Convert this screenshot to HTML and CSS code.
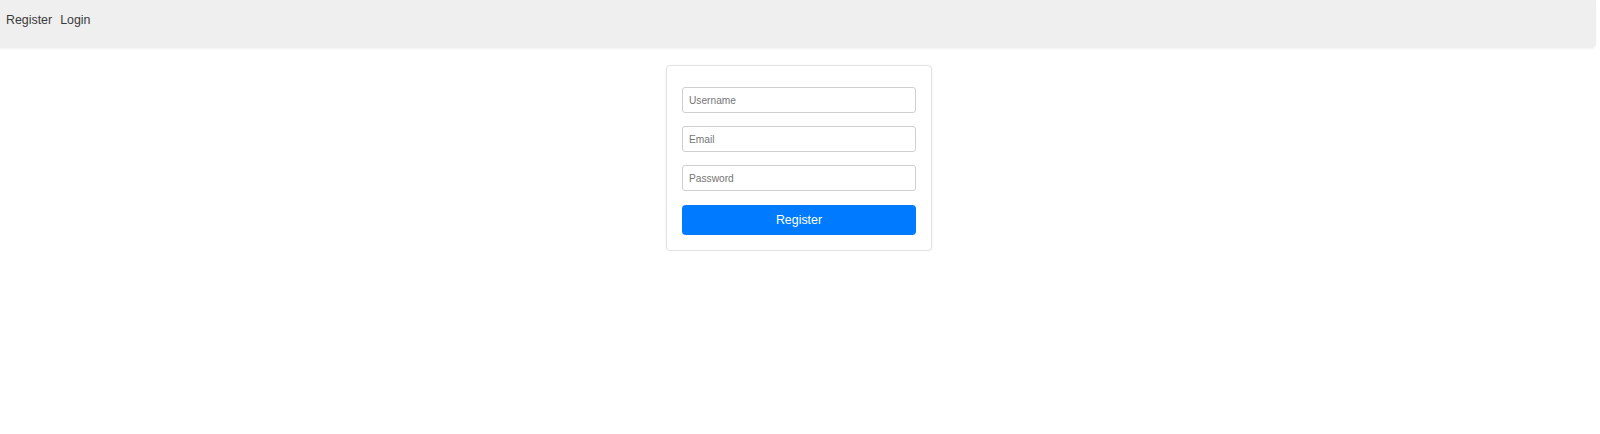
FILE: index.html
```html
<!DOCTYPE html>
<html lang="en">
<head>
<meta charset="utf-8">
<title>Register</title>
<link rel="stylesheet" href="styles.css">
</head>
<body>
<nav class="navbar">
  <a class="nav-link" href="#">Register</a>
  <a class="nav-link" href="#">Login</a>
</nav>
<main class="page">
  <form class="card">
    <input class="field" type="text" placeholder="Username">
    <input class="field" type="email" placeholder="Email">
    <input class="field" type="password" placeholder="Password">
    <button class="btn" type="button">Register</button>
  </form>
</main>
</body>
</html>
```

FILE: styles.css
```css
html, body {
  margin: 0;
  padding: 0;
  background: #fff;
  font-family: "Liberation Sans", Arial, sans-serif;
}

.navbar {
  box-sizing: border-box;
  height: 48px;
  margin: 0 4px 0 -4px;
  padding: 13px 10px 0;
  background: #efefef;
  border-radius: 0 0 5px 5px;
  box-shadow: 0 1px 2px rgba(0, 0, 0, 0.06);
  display: flex;
  align-items: flex-start;
  gap: 8px;
}

.nav-link {
  color: #3a3a3a;
  font-size: 12.4px;
  text-decoration: none;
  line-height: 14px;
}

.page {
  display: flex;
  justify-content: center;
  padding-top: 17px;
  padding-right: 2px;
}

.card {
  box-sizing: border-box;
  width: 266px;
  margin: 0;
  padding: 21px 15px 15px;
  border: 1px solid #e2e2e2;
  border-radius: 4px;
  box-shadow: 0 1px 3px rgba(0, 0, 0, 0.06);
  display: flex;
  flex-direction: column;
  gap: 13px;
}

.field {
  box-sizing: border-box;
  height: 26px;
  width: 100%;
  margin: 0;
  padding: 0 6px;
  border: 1px solid #cfcfcf;
  border-radius: 3px;
  font-family: "Liberation Sans", Arial, sans-serif;
  font-size: 10.2px;
  color: #333;
  outline: none;
}

.field::placeholder {
  color: #767676;
}

.btn {
  box-sizing: border-box;
  height: 30px;
  width: 100%;
  margin: 1px 0 0;
  padding: 0;
  border: none;
  border-radius: 4px;
  background: #007bff;
  color: #fff;
  font-family: "Liberation Sans", Arial, sans-serif;
  font-size: 12.4px;
  cursor: pointer;
}
```
